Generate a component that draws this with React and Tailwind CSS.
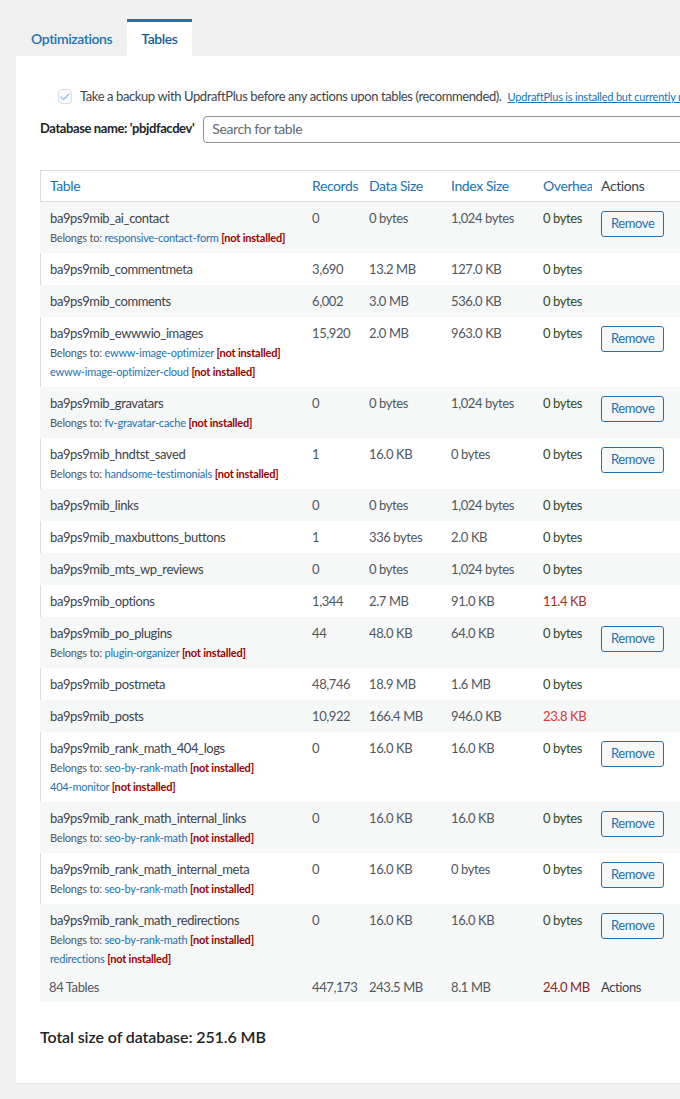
import { Check } from 'lucide-react'

const rows = [
  { name: 'ba9ps9mib_ai_contact', rec: '0', data: '0 bytes', idx: '1,024 bytes', over: '0 bytes', belongs: ['responsive-contact-form'], remove: true },
  { name: 'ba9ps9mib_commentmeta', rec: '3,690', data: '13.2 MB', idx: '127.0 KB', over: '0 bytes' },
  { name: 'ba9ps9mib_comments', rec: '6,002', data: '3.0 MB', idx: '536.0 KB', over: '0 bytes' },
  { name: 'ba9ps9mib_ewwwio_images', rec: '15,920', data: '2.0 MB', idx: '963.0 KB', over: '0 bytes', belongs: ['ewww-image-optimizer', 'ewww-image-optimizer-cloud'], remove: true },
  { name: 'ba9ps9mib_gravatars', rec: '0', data: '0 bytes', idx: '1,024 bytes', over: '0 bytes', belongs: ['fv-gravatar-cache'], remove: true },
  { name: 'ba9ps9mib_hndtst_saved', rec: '1', data: '16.0 KB', idx: '0 bytes', over: '0 bytes', belongs: ['handsome-testimonials'], remove: true },
  { name: 'ba9ps9mib_links', rec: '0', data: '0 bytes', idx: '1,024 bytes', over: '0 bytes' },
  { name: 'ba9ps9mib_maxbuttons_buttons', rec: '1', data: '336 bytes', idx: '2.0 KB', over: '0 bytes' },
  { name: 'ba9ps9mib_mts_wp_reviews', rec: '0', data: '0 bytes', idx: '1,024 bytes', over: '0 bytes' },
  { name: 'ba9ps9mib_options', rec: '1,344', data: '2.7 MB', idx: '91.0 KB', over: '11.4 KB', overTone: 'dark' },
  { name: 'ba9ps9mib_po_plugins', rec: '44', data: '48.0 KB', idx: '64.0 KB', over: '0 bytes', belongs: ['plugin-organizer'], remove: true },
  { name: 'ba9ps9mib_postmeta', rec: '48,746', data: '18.9 MB', idx: '1.6 MB', over: '0 bytes' },
  { name: 'ba9ps9mib_posts', rec: '10,922', data: '166.4 MB', idx: '946.0 KB', over: '23.8 KB', overTone: 'bright' },
  { name: 'ba9ps9mib_rank_math_404_logs', rec: '0', data: '16.0 KB', idx: '16.0 KB', over: '0 bytes', belongs: ['seo-by-rank-math', '404-monitor'], remove: true },
  { name: 'ba9ps9mib_rank_math_internal_links', rec: '0', data: '16.0 KB', idx: '16.0 KB', over: '0 bytes', belongs: ['seo-by-rank-math'], remove: true },
  { name: 'ba9ps9mib_rank_math_internal_meta', rec: '0', data: '16.0 KB', idx: '0 bytes', over: '0 bytes', belongs: ['seo-by-rank-math'], remove: true },
  { name: 'ba9ps9mib_rank_math_redirections', rec: '0', data: '16.0 KB', idx: '16.0 KB', over: '0 bytes', belongs: ['seo-by-rank-math', 'redirections'], remove: true },
]

const overClass = {
  dark: 'text-[#9a3326]',
  bright: 'text-[#d63638]',
}

function TableRow({ row, striped }) {
  const cell = 'px-[9px] py-2 align-top leading-4'
  return (
    <tr className={striped ? 'bg-[#f6f7f7]' : 'bg-white'}>
      <td className={`${cell} border-l ${striped ? 'border-transparent' : 'border-[#dcdcde]'} text-[#3c434a]`}>
        <div>{row.name}</div>
        {row.belongs && (
          <div className="mt-[2px] -mb-[2px] text-[11px] leading-[19px] tracking-[-0.2px]">
            {row.belongs.map((plugin, i) => (
              <div key={plugin} className="whitespace-nowrap">
                {i === 0 && <span className="text-[#50575e]">Belongs to: </span>}
                <span className="text-[#2271b1]">{plugin}</span>{' '}
                <span className="font-bold text-[#990000]">[not installed]</span>
              </div>
            ))}
          </div>
        )}
      </td>
      <td className={`${cell} text-[#50575e]`}>{row.rec}</td>
      <td className={`${cell} text-[#50575e]`}>{row.data}</td>
      <td className={`${cell} text-[#50575e]`}>{row.idx}</td>
      <td className={`${cell} whitespace-nowrap ${overClass[row.overTone] || 'text-[#2f4a2a]'}`}>{row.over}</td>
      <td className="px-[9px] pt-[9px] align-top">
        {row.remove && (
          <button className="h-[26px] rounded-[3px] border border-[#2271b1] bg-[#f6f7f7] px-[9px] text-[13px] leading-none tracking-[-0.4px] text-[#2271b1]">
            Remove
          </button>
        )}
      </td>
    </tr>
  )
}

export default function App() {
  return (
    <div className="min-h-screen w-full overflow-hidden bg-[#f0f0f1] pt-[19px] pl-4 font-['Lato',sans-serif] text-[13px] tracking-[-0.4px] text-[#3c434a]">
      <div className="flex text-sm font-semibold">
        <div className="flex h-[37px] items-center px-[15px] pt-[3px] text-[#2271b1]">Optimizations</div>
        <div className="flex h-[37px] items-center border-t-[3px] border-[#2271b1] bg-white px-[14px] text-[#135e96]">
          Tables
        </div>
      </div>

      <div className="w-[820px] bg-white pl-6 pt-[31px] pb-[34px] shadow-[0_1px_1px_rgba(0,0,0,0.04)]">
        <div className="ml-[18px] flex items-center gap-2 whitespace-nowrap">
          <span className="flex size-[15px] items-center justify-center rounded-[4px] border border-[#dcdcde] bg-[#fbfbfc]">
            <Check className="size-3 text-[#9ec2e6]" strokeWidth={3} aria-hidden="true" />
          </span>
          <span>Take a backup with UpdraftPlus before any actions upon tables (recommended).</span>
          <a className="-ml-[2px] text-[11px] tracking-[-0.2px] text-[#2271b1] underline">
            UpdraftPlus is installed but currently not active. Follow this link to activate the UpdraftPlus plugin.
          </a>
        </div>

        <div className="mt-[9px] flex items-center gap-[9px]">
          <span className="font-bold text-[#1d2327]">Database name: 'pbjdfacdev'</span>
          <div className="flex h-[27px] w-[560px] items-center rounded-[4px] border border-[#8c8f94] px-2 text-sm text-[#646970]">
            Search for table
          </div>
        </div>

        <table className="mt-[27px] w-[760px] table-fixed border-separate border-spacing-0 text-[13px]">
          <colgroup>
            <col className="w-[263px]" />
            <col className="w-[57px]" />
            <col className="w-[82px]" />
            <col className="w-[92px]" />
            <col className="w-[58px]" />
            <col />
          </colgroup>
          <thead>
            <tr className="text-left text-sm font-normal">
              <th className="h-8 border-y border-l border-[#dcdcde] px-[9px] font-normal text-[#2271b1]">Table</th>
              <th className="border-y border-[#dcdcde] px-[9px] font-normal text-[#2271b1]">Records</th>
              <th className="border-y border-[#dcdcde] px-[9px] font-normal text-[#2271b1]">Data Size</th>
              <th className="border-y border-[#dcdcde] px-[9px] font-normal text-[#2271b1]">Index Size</th>
              <th className="overflow-hidden whitespace-nowrap border-y border-[#dcdcde] px-[9px] font-normal text-[#2271b1]">
                Overhead
              </th>
              <th className="border-y border-[#dcdcde] px-[9px] font-normal text-[#3c434a]">Actions</th>
            </tr>
          </thead>
          <tbody>
            {rows.map((row, i) => (
              <TableRow key={row.name} row={row} striped={i % 2 === 0} />
            ))}
          </tbody>
          <tfoot>
            <tr className="bg-[#f6f7f7] text-[#50575e]">
              <td className="h-7 px-[9px]">84 Tables</td>
              <td className="px-[9px]">447,173</td>
              <td className="px-[9px]">243.5 MB</td>
              <td className="px-[9px]">8.1 MB</td>
              <td className="whitespace-nowrap px-[9px] text-[#8a2424]">24.0 MB</td>
              <td className="px-[9px] text-[#3c434a]">Actions</td>
            </tr>
          </tfoot>
        </table>

        <p className="mt-[23px] text-base font-semibold tracking-[-0.1px] text-[#1d2327]">Total size of database: 251.6 MB</p>
      </div>
    </div>
  )
}
